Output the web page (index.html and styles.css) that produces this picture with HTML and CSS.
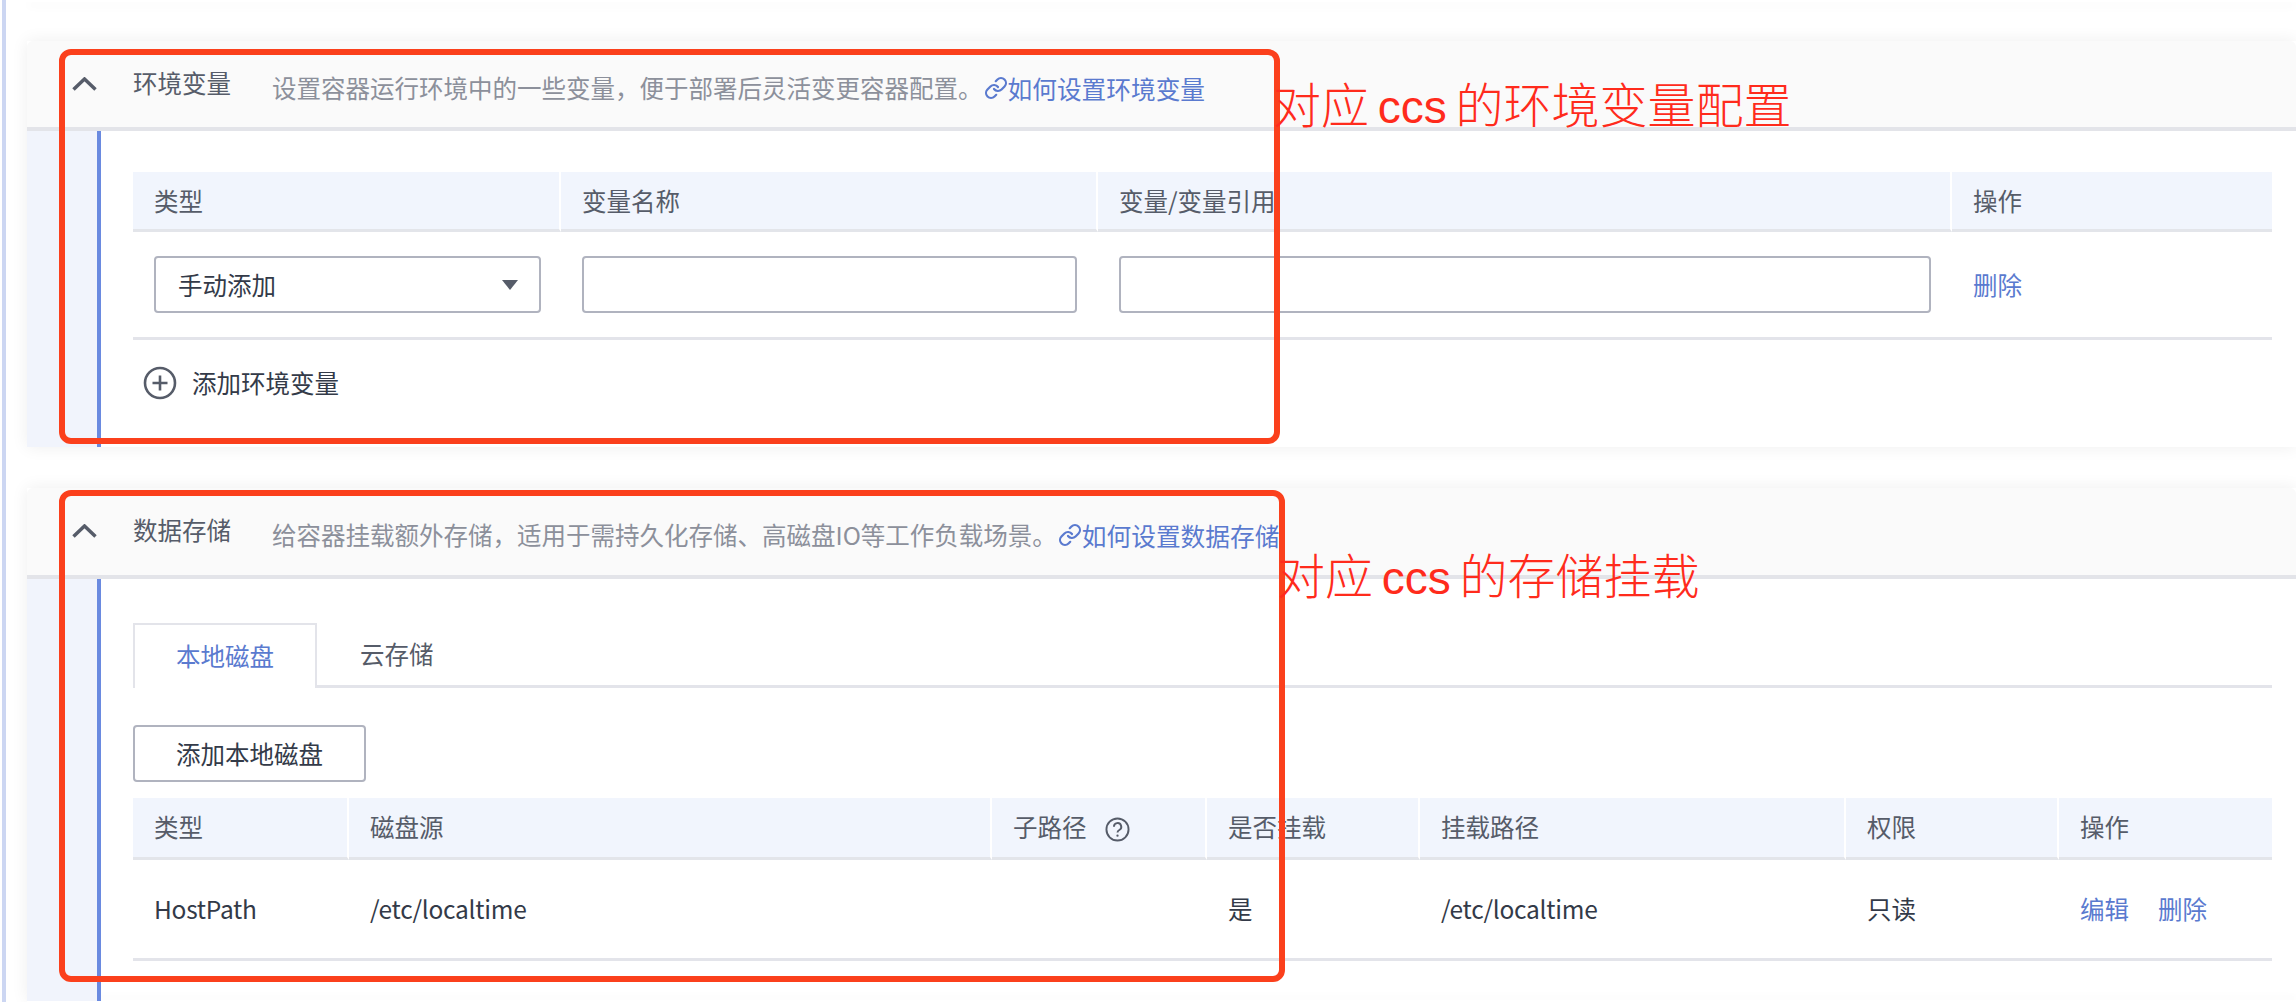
FILE: index.html
```html
<!DOCTYPE html>
<html lang="zh-CN">
<head>
    <meta charset="UTF-8">
    <title>容器配置</title>
    <link rel="stylesheet" href="styles.css">
</head>
<body>
    <div class="page">
        <div class="stub-top"></div>

        <section class="card card-env">
            <header class="card-head">
                <svg class="chevron" viewBox="0 0 25 14"><polyline points="1.5,12.5 12.5,2 23.5,12.5"/></svg>
                <span class="card-title">环境变量</span>
                <span class="card-desc">设置容器运行环境中的一些变量<span class="comma">，</span>便于部署后灵活变更容器配置。</span>
                <a class="help-link" href="#">
                    <svg class="link-icon" viewBox="0 0 24 24"><path d="M10 13a5 5 0 0 0 7.54.54l3-3a5 5 0 0 0-7.07-7.07l-1.72 1.71"/><path d="M14 11a5 5 0 0 0-7.54-.54l-3 3a5 5 0 0 0 7.07 7.07l1.71-1.71"/></svg>如何设置环境变量</a>
            </header>
            <div class="card-body">
                <div class="rail"></div>
                <div class="content content-env">
                    <table class="grid env-table">
                        <colgroup><col class="env-c1"><col class="env-c2"><col class="env-c3"><col class="env-c4"></colgroup>
                        <thead>
                            <tr><th>类型</th><th>变量名称</th><th>变量/变量引用</th><th>操作</th></tr>
                        </thead>
                        <tbody>
                            <tr>
                                <td>
                                    <div class="select"><span>手动添加</span><i class="caret"></i></div>
                                </td>
                                <td><input class="field" type="text"></td>
                                <td><input class="field" type="text"></td>
                                <td><a class="action" href="#">删除</a></td>
                            </tr>
                        </tbody>
                    </table>
                    <div class="add-row">
                        <svg class="plus-icon" viewBox="0 0 34 34"><circle cx="17" cy="17" r="15"/><path d="M17 9.5v15M9.5 17h15"/></svg>
                        <span>添加环境变量</span>
                    </div>
                </div>
            </div>
        </section>

        <section class="card card-store">
            <header class="card-head">
                <svg class="chevron" viewBox="0 0 25 14"><polyline points="1.5,12.5 12.5,2 23.5,12.5"/></svg>
                <span class="card-title">数据存储</span>
                <span class="card-desc">给容器挂载额外存储<span class="comma">，</span>适用于需持久化存储、高磁盘IO等工作负载场景。</span>
                <a class="help-link" href="#">
                    <svg class="link-icon" viewBox="0 0 24 24"><path d="M10 13a5 5 0 0 0 7.54.54l3-3a5 5 0 0 0-7.07-7.07l-1.72 1.71"/><path d="M14 11a5 5 0 0 0-7.54-.54l-3 3a5 5 0 0 0 7.07 7.07l1.71-1.71"/></svg>如何设置数据存储</a>
            </header>
            <div class="card-body">
                <div class="rail"></div>
                <div class="content content-store">
                    <div class="tabs">
                        <span class="tab active">本地磁盘</span>
                        <span class="tab">云存储</span>
                    </div>
                    <button class="btn" type="button">添加本地磁盘</button>
                    <table class="grid mount-table">
                        <colgroup><col class="m-c1"><col class="m-c2"><col class="m-c3"><col class="m-c4"><col class="m-c5"><col class="m-c6"><col class="m-c7"></colgroup>
                        <thead>
                            <tr>
                                <th>类型</th>
                                <th>磁盘源</th>
                                <th>子路径<svg class="help-icon" viewBox="0 0 26 26"><circle cx="13" cy="13" r="11.5"/><path d="M9.3 10.2a3.8 3.8 0 1 1 5.6 3.3c-1.3.7-1.9 1.3-1.9 2.7"/><circle class="dot" cx="13" cy="19.4" r="1.2"/></svg></th>
                                <th>是否挂载</th>
                                <th>挂载路径</th>
                                <th>权限</th>
                                <th>操作</th>
                            </tr>
                        </thead>
                        <tbody>
                            <tr>
                                <td class="latin">HostPath</td>
                                <td class="latin">/etc/localtime</td>
                                <td></td>
                                <td>是</td>
                                <td class="latin">/etc/localtime</td>
                                <td>只读</td>
                                <td><a class="action" href="#">编辑</a><a class="action" href="#">删除</a></td>
                            </tr>
                        </tbody>
                    </table>
                </div>
            </div>
        </section>

        <div class="stub-bottom"></div>

        <!-- red annotations drawn over the screenshot -->
        <div class="mark mark-env"></div>
        <div class="mark mark-store"></div>
        <div class="note note-env">对应<span class="note-latin"> ccs </span>的环境变量配置</div>
        <div class="note note-store">对应<span class="note-latin"> ccs </span>的存储挂载</div>
    </div>
</body>
</html>
```

FILE: styles.css
```css
* {
    box-sizing: border-box;
}
html, body {
    margin: 0;
    height: 1002px;
    overflow: hidden;
    background: #fff;
}
body {
    font-family: "Noto Sans CJK SC", "Noto Sans", sans-serif;
    font-size: 24.5px;
    color: #333a48;
}
.page {
    position: relative;
    height: 1002px;
    padding-left: 27px;
}
.page::before {
    content: "";
    position: absolute;
    left: 2px;
    top: 0;
    bottom: 0;
    width: 4px;
    background: #ccd6f2;
}
.stub-top {
    height: 2px;
    margin-bottom: 39px;
    background: #fff;
    box-shadow: 0 4px 10px rgba(0, 0, 0, .06);
}
.stub-bottom {
    height: 2px;
    background: #fff;
    box-shadow: 0 -3px 7px rgba(0, 0, 0, .05);
}
.card {
    background: #fff;
    box-shadow: 0 0 16px rgba(0, 0, 0, .07);
}
.card-env {
    height: 406px;
    margin-bottom: 41px;
}
.card-store {
    height: 512px;
}
.card-head {
    display: flex;
    align-items: flex-start;
    height: 90px;
    padding: 24px 0 0 45px;
    background: #fafafa;
    border-bottom: 4px solid #e3e4e9;
    border-radius: 6px 6px 0 0;
}
.card-store .card-head {
    height: 91px;
}
.chevron {
    width: 25px;
    height: 14px;
    margin: 12px 36px 0 0;
    flex: none;
}
.chevron polyline {
    fill: none;
    stroke: #565c69;
    stroke-width: 3.5;
}
.card-title {
    line-height: 36px;
    color: #565c69;
}
.card-desc {
    margin: 5px 0 0 41px;
    line-height: 36px;
    color: #8c909b;
}
.comma {
    font-family: "Noto Sans CJK TC", sans-serif;
}
.help-link {
    display: flex;
    align-items: center;
    margin: 5px 0 0 1px;
    font-size: 24.7px;
    line-height: 36px;
    color: #5a7acf;
    text-decoration: none;
}
.link-icon {
    width: 24px;
    height: 24px;
    flex: none;
    fill: none;
    stroke: #5a7acf;
    stroke-width: 2.2;
    stroke-linecap: round;
}
.card-body {
    display: flex;
    height: calc(100% - 90px);
}
.rail {
    width: 74px;
    flex: none;
    background: #f1f4fc;
    border-right: 4px solid #6a8ae0;
}
.content {
    width: 2139px;
    margin-left: 32px;
}
.content-env {
    padding-top: 41px;
}
.content-store {
    padding-top: 44px;
}
.grid {
    width: 100%;
    table-layout: fixed;
    border-collapse: separate;
    border-spacing: 0;
}
.grid th {
    height: 60px;
    padding: 0 21px;
    text-align: left;
    font-weight: 400;
    color: #565c69;
    background: #f1f5fd;
    border-right: 2px solid #fff;
    border-bottom: 3px solid #e3e5ea;
}
.grid th:last-child {
    border-right: 0;
}
.grid td {
    padding: 0 20px 0 21px;
    border-bottom: 3px solid #e3e4ea;
}
.grid td.latin {
    letter-spacing: -.25px;
}
.env-table td {
    height: 108px;
}
.env-table td + td {
    padding: 0 21px;
}
.env-c1 { width: 428px; }
.env-c2 { width: 537px; }
.env-c3 { width: 854px; }
.env-c4 { width: 320px; }
.m-c1 { width: 216px; }
.m-c2 { width: 643px; }
.m-c3 { width: 215px; }
.m-c4 { width: 213px; }
.m-c5 { width: 426px; }
.m-c6 { width: 213px; }
.m-c7 { width: 213px; }
.select {
    display: flex;
    align-items: center;
    justify-content: space-between;
    height: 57px;
    padding: 0 21px 0 22px;
    border: 2px solid #b0b3bf;
    border-radius: 4px;
}
.caret {
    width: 0;
    height: 0;
    border-left: 8px solid transparent;
    border-right: 8px solid transparent;
    border-top: 10px solid #565c69;
}
.field {
    display: block;
    width: 100%;
    height: 57px;
    border: 2px solid #b0b3bf;
    border-radius: 4px;
    background: #fff;
}
.action {
    color: #5a7acf;
    text-decoration: none;
    margin-right: 29px;
}
.add-row {
    display: flex;
    align-items: center;
    gap: 15px;
    padding: 25px 0 0 10px;
}
.plus-icon {
    width: 34px;
    height: 34px;
    flex: none;
    fill: none;
    stroke: #565c69;
    stroke-width: 2.6;
}
.tabs {
    display: flex;
    height: 65px;
    border-bottom: 3px solid #e3e4ea;
}
.tab {
    height: 65px;
    padding: 13px 43px 0;
    line-height: 36px;
    color: #565c69;
    white-space: nowrap;
}
.tab.active {
    width: 184px;
    color: #5a7acf;
    background: #fff;
    border: 2px solid #e3e4ea;
    border-bottom: 0;
    padding: 13px 0 0 41px;
}
.btn {
    display: block;
    width: 233px;
    height: 57px;
    margin: 37px 0 16px;
    padding: 0;
    font: inherit;
    color: #333a48;
    background: #fff;
    border: 2px solid #b0b3bf;
    border-radius: 4px;
}
.mount-table th {
    height: 62px;
    padding-bottom: 2px;
}
.mount-table td {
    height: 101px;
    padding-bottom: 2px;
}
.help-icon {
    width: 25px;
    height: 25px;
    margin-left: 18px;
    vertical-align: -5px;
    fill: none;
    stroke: #565c69;
    stroke-width: 2;
}
.help-icon .dot {
    fill: #565c69;
    stroke: none;
}
.mark {
    position: absolute;
    left: 59px;
    border: 6px solid #fb401c;
    border-radius: 12px;
}
.mark-env {
    top: 49px;
    width: 1221px;
    height: 395px;
}
.mark-store {
    top: 490px;
    width: 1226px;
    height: 492px;
}
.note {
    position: absolute;
    font-size: 48px;
    font-weight: 300;
    line-height: 60px;
    color: #ff2b1c;
    white-space: nowrap;
}
.note-latin {
    font-family: "Liberation Sans", sans-serif;
    font-size: 46px;
    word-spacing: -4px;
}
.note-env {
    left: 1273px;
    top: 72px;
}
.note-store {
    left: 1277px;
    top: 543px;
}
```
